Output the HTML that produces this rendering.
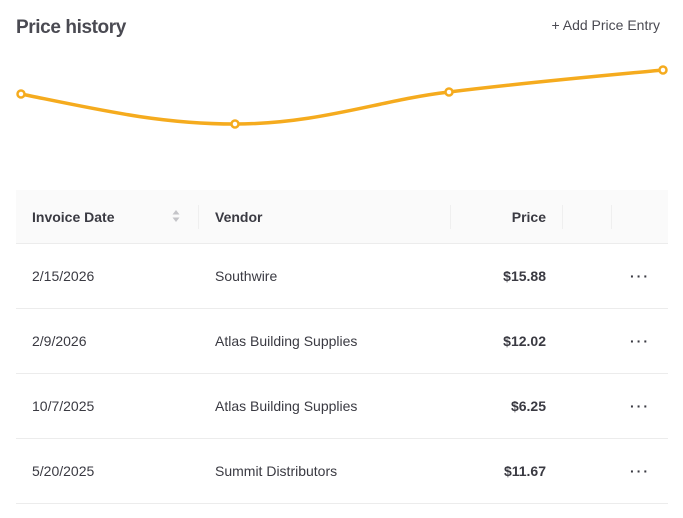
<!DOCTYPE html>
<html><head><style>
body{margin:0;background:#fff;font-family:"Liberation Sans",sans-serif;color:#3a3a40;width:683px;height:518px;overflow:hidden;position:relative}
.t{position:absolute;left:16px;top:17px;font-size:19px;font-weight:bold;color:#4a4a52;letter-spacing:-0.4px}
.add{position:absolute;right:23px;top:17px;font-size:14px;color:#4a4a52}
.tbl{position:absolute;left:16px;top:190px;width:652px}
.hd{height:53px;background:#fafafa;border-bottom:1px solid #ececec;position:relative;font-size:14px;font-weight:bold;color:#3a3a42}
.row{height:64px;border-bottom:1px solid #ececec;position:relative;font-size:14px;color:#3a3a42}
.c{position:absolute;top:0;line-height:100%}
.hd .c,.row .c{display:flex;align-items:center;height:100%}
.sep{position:absolute;top:15px;height:24px;width:1px;background:#efefef}
.dots{position:absolute;left:614px;top:0;height:100%;display:flex;align-items:center;font-weight:bold;letter-spacing:2px;font-size:14px}
</style></head><body>
<div class="t">Price history</div>
<div class="add">+ Add Price Entry</div>
<svg style="position:absolute;left:0;top:0" width="683" height="180">
<path d="M21,94 C100,110 160,124 235,124 C320,124 380,100 449,92 C530,82 600,76 663,70" fill="none" stroke="#f5ab1e" stroke-width="3.5"/>
<g fill="#fff" stroke="#f5ab1e" stroke-width="2.5">
<circle cx="21" cy="94" r="3.5"/><circle cx="235" cy="124" r="3.5"/><circle cx="449" cy="92" r="3.5"/><circle cx="663" cy="70" r="3.5"/></g>
</svg>
<div class="tbl">
<div class="hd">
<div class="c" style="left:16px">Invoice Date</div>
<svg style="position:absolute;left:156px;top:19px" width="8" height="14"><path d="M4,1 L7.5,5.5 H0.5Z M4,13 L7.5,8.5 H0.5Z" fill="#c4c4c8"/></svg>
<div class="sep" style="left:182px"></div>
<div class="c" style="left:199px">Vendor</div>
<div class="sep" style="left:434px"></div>
<div class="c" style="right:122px">Price</div>
<div class="sep" style="left:546px"></div>
<div class="sep" style="left:595px"></div>
</div>
<div class="row"><div class="c" style="left:16px">2/15/2026</div><div class="c" style="left:199px">Southwire</div><div class="c" style="right:122px;font-weight:bold">$15.88</div><div class="dots">···</div></div>
<div class="row"><div class="c" style="left:16px">2/9/2026</div><div class="c" style="left:199px">Atlas Building Supplies</div><div class="c" style="right:122px;font-weight:bold">$12.02</div><div class="dots">···</div></div>
<div class="row"><div class="c" style="left:16px">10/7/2025</div><div class="c" style="left:199px">Atlas Building Supplies</div><div class="c" style="right:122px;font-weight:bold">$6.25</div><div class="dots">···</div></div>
<div class="row"><div class="c" style="left:16px">5/20/2025</div><div class="c" style="left:199px">Summit Distributors</div><div class="c" style="right:122px;font-weight:bold">$11.67</div><div class="dots">···</div></div>
</div>
</body></html>
